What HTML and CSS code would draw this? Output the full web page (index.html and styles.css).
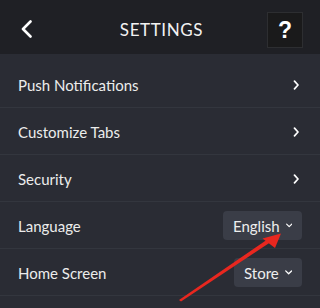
FILE: index.html
```html
<!DOCTYPE html>
<html>
<head>
<meta charset="utf-8">
<link rel="stylesheet" href="styles.css">
</head>
<body>
<div class="screen">
  <header class="topbar">
    <div class="back">
      <svg width="13" height="18" viewBox="0 0 13 18"><path d="M10.5 1.5 L3 9 L10.5 16.5" fill="none" stroke="#fff" stroke-width="2.6" stroke-linecap="round" stroke-linejoin="round"/></svg>
    </div>
    <div class="title">SETTINGS</div>
    <div class="help-wrap"><div class="help">?</div></div>
  </header>
  <ul class="list">
    <li class="row"><span>Push Notifications</span><svg class="chev" width="7" height="10" viewBox="0 0 7 10"><path d="M1.5 1.2 L5 5 L1.5 8.8" fill="none" stroke="#fff" stroke-width="1.7" stroke-linecap="round" stroke-linejoin="round"/></svg></li>
    <li class="row"><span>Customize Tabs</span><svg class="chev" width="7" height="10" viewBox="0 0 7 10"><path d="M1.5 1.2 L5 5 L1.5 8.8" fill="none" stroke="#fff" stroke-width="1.7" stroke-linecap="round" stroke-linejoin="round"/></svg></li>
    <li class="row"><span>Security</span><svg class="chev" width="7" height="10" viewBox="0 0 7 10"><path d="M1.5 1.2 L5 5 L1.5 8.8" fill="none" stroke="#fff" stroke-width="1.7" stroke-linecap="round" stroke-linejoin="round"/></svg></li>
    <li class="row"><span>Language</span><div class="select select-lang">English<svg class="down" width="10" height="7" viewBox="0 0 10 7"><path d="M1 1.3 L5 5.2 L9 1.3" fill="none" stroke="#fff" stroke-width="1.8" stroke-linecap="round" stroke-linejoin="round"/></svg></div></li>
    <li class="row"><span>Home Screen</span><div class="select select-home">Store<svg class="down" width="10" height="7" viewBox="0 0 10 7"><path d="M1 1.3 L5 5.2 L9 1.3" fill="none" stroke="#fff" stroke-width="1.8" stroke-linecap="round" stroke-linejoin="round"/></svg></div></li>
  </ul>
  <svg class="arrow" width="320" height="308" viewBox="0 0 320 308">
    <polygon points="179,300 181,301.5 270,242.5 268,239" fill="#e8271f"/>
    <polygon points="281,233.5 262.5,238.5 275,248" fill="#e8271f"/>
  </svg>
</div>
</body>
</html>
```
FILE: styles.css
```css
* { box-sizing: border-box; }
html, body { margin: 0; padding: 0; }
body {
  background: #2a2c34;
  font-family: "Lato", "Noto Sans", sans-serif;
  color: #ececec;
}
.screen {
  position: relative;
  width: 320px;
  height: 308px;
  overflow: hidden;
  background: #2a2c34;
}
.topbar {
  height: 54px;
  background: #1f2025;
  display: grid;
  grid-template-columns: 1fr auto 1fr;
  align-items: center;
  padding: 0 17px 0 20px;
}
.back { display: flex; align-items: center; padding-top: 4px; }
.title {
  font-size: 17px;
  letter-spacing: 0.6px;
  color: #f2f2f2;
  padding-top: 5px;
}
.help-wrap { display: flex; justify-content: flex-end; }
.help {
  width: 36px;
  height: 36px;
  margin-top: 6px;
  background: #1a1a1b;
  border: 1px solid #2d2e31;
  display: flex;
  align-items: center;
  justify-content: center;
  font-size: 23px;
  font-weight: 700;
  color: #fff;
  font-family: "Liberation Sans", sans-serif;
}
.list {
  list-style: none;
  margin: 0;
  padding: 7px 0 0;
}
.row {
  height: 47px;
  border-bottom: 1px solid #33363e;
  display: flex;
  align-items: center;
  justify-content: space-between;
  padding: 1px 18px 0 18px;
  font-size: 15px;
}
.chev { margin-right: 2px; }
.select {
  height: 29px;
  background: #3a3d47;
  border-radius: 4px;
  display: flex;
  align-items: center;
  font-size: 15px;
  color: #eeeeee;
  padding: 0 10px 0 10px;
  gap: 6px;
}
.select-lang { width: 79px; }
.select-home { width: 68px; }
.arrow {
  position: absolute;
  left: 0;
  top: 0;
  pointer-events: none;
}
```
